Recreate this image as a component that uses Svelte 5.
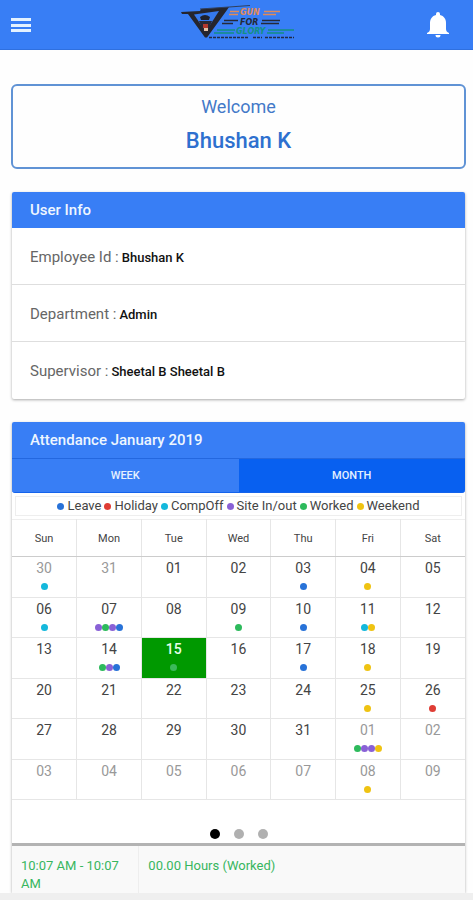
<script>
  let view = $state('month');
  let page = $state(0);

  const info = [
    ['Employee Id', 'Bhushan K'],
    ['Department', 'Admin'],
    ['Supervisor', 'Sheetal B Sheetal B']
  ];
  const legend = [
    ['leave', 'Leave'],
    ['holiday', 'Holiday'],
    ['compoff', 'CompOff'],
    ['site', 'Site In/out'],
    ['worked', 'Worked'],
    ['weekend', 'Weekend']
  ];
  const weekdays = ['Sun', 'Mon', 'Tue', 'Wed', 'Thu', 'Fri', 'Sat'];
  const marks = {
    0: ['compoff'],
    4: ['leave'],
    5: ['weekend'],
    7: ['compoff'],
    8: ['site', 'worked', 'site', 'leave'],
    10: ['worked'],
    11: ['leave'],
    12: ['compoff', 'weekend'],
    15: ['worked', 'site', 'leave'],
    16: ['worked'],
    18: ['leave'],
    19: ['weekend'],
    26: ['weekend'],
    27: ['holiday'],
    33: ['worked', 'site', 'site', 'weekend'],
    40: ['weekend']
  };
  const weeks = Array.from({ length: 6 }, (_, w) =>
    Array.from({ length: 7 }, (_, d) => {
      const i = w * 7 + d;
      const day = i < 2 ? 30 + i : i < 33 ? i - 1 : i - 32;
      return {
        label: String(day).padStart(2, '0'),
        outside: i < 2 || i >= 33,
        today: i === 16,
        marks: marks[i] ?? []
      };
    })
  );
</script>

<div class="screen">
  <header>
    <button class="icon" aria-label="Menu">
      <svg width="20" height="16" viewBox="0 0 20 16" fill="#e4f2ff">
        <rect y="1" width="20" height="3" /><rect y="7" width="20" height="3" /><rect y="12" width="20" height="3" />
      </svg>
    </button>
    <svg class="logo" width="116" height="36" viewBox="0 0 116 36" role="img" aria-label="Gun for Glory">
      <path d="M1 8 20 7 21 5 49 3 47 6 27 33.500H25L8 10 2 10Z" fill="#25252d" />
      <path d="M14 10.500 39 7 32 18 28 24H23Z" fill="#3579ee" />
      <path d="M20 13Q25 9 30 13L29 16H21Z" fill="#20222c" />
      <path d="M19 17H32L28 27H23Z" fill="#282936" />
      <path d="M23 20h5v4h-5z" fill="#b3382e" />
      <path d="M24 24h4v3h-4z" fill="#e3c1a6" />
      <path d="m20 5 29-2L70 1.500" fill="none" stroke="#30405e" stroke-width="1.200" />
      <g font-family="DejaVu Sans, sans-serif" font-weight="700" font-style="italic" font-size="8">
        <text x="60" y="11" fill="#e08a5a">GUN</text>
        <text x="60" y="20.500" fill="#242938">FOR</text>
        <text x="56" y="30" fill="#129083">GLORY</text>
      </g>
      <path d="M50 7.500h9M49 10.500h9M84 7.500h16M83 10.500h13" stroke="#e08a5a" stroke-width="1.500" />
      <path d="M44 16.500h14M42 19.500h11M82 16.500h18M81 19.500h18" stroke="#242938" stroke-width="1.500" />
      <path d="M37 26h18M34 29h20M88 26h26M87 29h17" stroke="#129083" stroke-width="1.500" />
      <path d="M29 33.500H69M73 33.500H82M85 33.500H114" stroke="#202b45" stroke-width="1.500" stroke-dasharray="3 1" />
    </svg>
    <button class="icon bell" aria-label="Notifications">
      <svg width="22" height="26" viewBox="0 0 22 26" fill="#fff">
        <path d="M9 3V2a2 2 0 0 1 4 0v1c4 1 6 4 6 8v6c0 2 1 3 3 4v1H0v-1c2-1 3-2 3-4v-6c0-4 2-7 6-8ZM8.500 23h5a2.500 2.500 0 0 1-5 0Z" />
      </svg>
    </button>
  </header>

  <main>
    <section class="welcome">
      <p>Welcome</p>
      <h1>Bhushan K</h1>
    </section>

    <section class="card">
      <h2>User Info</h2>
      <dl>
        {#each info as [label, value]}
          <div><dt>{label} :</dt><dd>{value}</dd></div>
        {/each}
      </dl>
    </section>

    <section class="card attendance">
      <h2>Attendance January 2019</h2>
      <div class="tabs">
        <button class:active={view === 'week'} aria-pressed={view === 'week'} onclick={() => (view = 'week')}>WEEK</button>
        <button class:active={view === 'month'} aria-pressed={view === 'month'} onclick={() => (view = 'month')}>MONTH</button>
      </div>
      <ul class="legend">
        {#each legend as [kind, label]}
          <li><i class="dot {kind}"></i>{label}</li>
        {/each}
      </ul>
      <table class="calendar">
        <thead>
          <tr>{#each weekdays as name}<th scope="col">{name}</th>{/each}</tr>
        </thead>
        <tbody>
          {#each weeks as week}
            <tr>
              {#each week as day}
                <td class:outside={day.outside} class:today={day.today}>
                  <span>{day.label}</span>
                  <div class="marks">{#each day.marks as kind}<i class="dot {kind}"></i>{/each}</div>
                </td>
              {/each}
            </tr>
          {/each}
        </tbody>
      </table>
      <div class="pager">
        {#each [0, 1, 2] as n}
          <button class:current={page === n} aria-label="Page {n + 1}" onclick={() => (page = n)}></button>
        {/each}
      </div>
      <table class="log">
        <tbody>
          <tr><td>10:07 AM - 10:07 AM</td><td>00.00 Hours (Worked)</td></tr>
        </tbody>
      </table>
    </section>
  </main>
  <footer></footer>
</div>

<style>
  :global(body) { background: #fefefe; }
  .screen {
    font-family: Roboto, "Liberation Sans", sans-serif;
    font-size: 14px;
    color: #444;
    min-height: 100vh;
    display: flex;
    flex-direction: column;
  }
  button { font: inherit; border: 0; margin: 0; padding: 0; cursor: pointer; }
  h1, h2, p, dl, dd, ul { margin: 0; padding: 0; }
  header {
    height: 50px;
    box-sizing: border-box;
    background: #387ef5;
    border-bottom: 1px solid #2f70df;
    display: grid;
    grid-template-columns: 1fr auto 1fr;
    align-items: center;
    padding: 0 24px 0 11px;
  }
  .icon { background: none; display: flex; }
  .bell { justify-self: end; }
  .logo { margin: 0 0 6px 16px; }
  main { flex: 1; padding: 34px 7px 0 11px; }
  .welcome {
    border: 2px solid #6093d5;
    border-radius: 6px;
    height: 85px;
    box-sizing: border-box;
    text-align: center;
    color: #4379c8;
    padding-top: 10px;
  }
  .welcome p { font-size: 18px; line-height: 22px; }
  h1 { font-size: 22px; line-height: 26px; font-weight: 500; color: #2e70cf; margin-top: 10px; }
  .card {
    margin: 23px 1px 0;
    background: #fff;
    border-radius: 2px;
    box-shadow: 0 1px 3px #0005;
  }
  h2 {
    background: #387ef5;
    color: #eef6ff;
    font-size: 15px;
    line-height: 36px;
    font-weight: 500;
    padding-left: 18px;
    border-radius: 2px 2px 0 0;
  }
  dl div {
    display: flex;
    gap: 3px;
    align-items: center;
    box-sizing: border-box;
    height: 57px;
    padding: 2px 18px 0;
    border-bottom: 1px solid #dedede;
  }
  dl div:last-child { border-color: transparent; }
  dt { color: #666; font-size: 15px; }
  dd { color: #111; font-size: 13px; font-weight: 500; }
  .tabs { display: flex; border-top: 1px solid #2367df; }
  .tabs button {
    flex: 1;
    height: 34px;
    background: #387ef5;
    color: #e4f0ff;
    font-size: 11px;
    font-weight: 500;
    border-radius: 0 0 0 3px;
    border-bottom: 1px solid #1463ec;
  }
  .tabs button:last-child { border-radius: 0 0 3px 0; }
  .tabs .active { background: #0860f0; }
  .legend {
    list-style: none;
    display: flex;
    justify-content: center;
    gap: 3px;
    margin: 3px;
    border: 1px solid #eee;
    font-size: 13px;
    line-height: 18px;
    white-space: nowrap;
  }
  .legend li { display: flex; align-items: center; gap: 3px; }
  .dot { display: block; width: 7px; height: 7px; border-radius: 50%; }
  .leave { background: #2872d8; }
  .holiday { background: #df3d35; }
  .compoff { background: #14b8dc; }
  .site { background: #8961d6; }
  .worked { background: #2dba5c; }
  .weekend { background: #efc312; }
  table { border-collapse: collapse; table-layout: fixed; width: 100%; }
  .calendar { border-top: 1px solid #eee; height: 281px; }
  th { height: 36px; padding: 0; font-size: 11px; font-weight: 400; border-right: 1px solid #e6e6e6; border-bottom: 1px solid #ccc; }
  .calendar td {
    height: 39px;
    padding: 0;
    vertical-align: top;
    text-align: center;
    line-height: 23px;
    border-right: 1px solid #e6e6e6;
    border-bottom: 1px solid #e6e6e6;
  }
  th:last-child, .calendar td:last-child { border-right: 0; }
  .calendar .outside { color: #999; }
  .calendar .today { background: #090; color: #e8ffe8; font-weight: 500; }
  .marks { display: flex; justify-content: center; height: 14px; padding-top: 3px; box-sizing: border-box; }
  .today .worked { background: #3bb95b; }
  .pager { display: flex; justify-content: center; align-items: center; gap: 14px; height: 43px; padding-top: 25px; box-sizing: border-box; }
  .pager button { width: 10px; height: 10px; border-radius: 50%; background: #b0b0b0; }
  .pager .current { background: #000; }
  .log { border-top: 3px solid #b3b3b3; background: #f9f9f9; }
  .log td { height: 47px; box-sizing: border-box; vertical-align: top; padding: 11px 10px 0 9px; line-height: 18px; font-size: 13px; color: #37b65e; }
  .log td:first-child { width: 28%; border-right: 1px solid #eee; }
  footer { height: 7px; background: #efefef; position: relative; }
</style>
